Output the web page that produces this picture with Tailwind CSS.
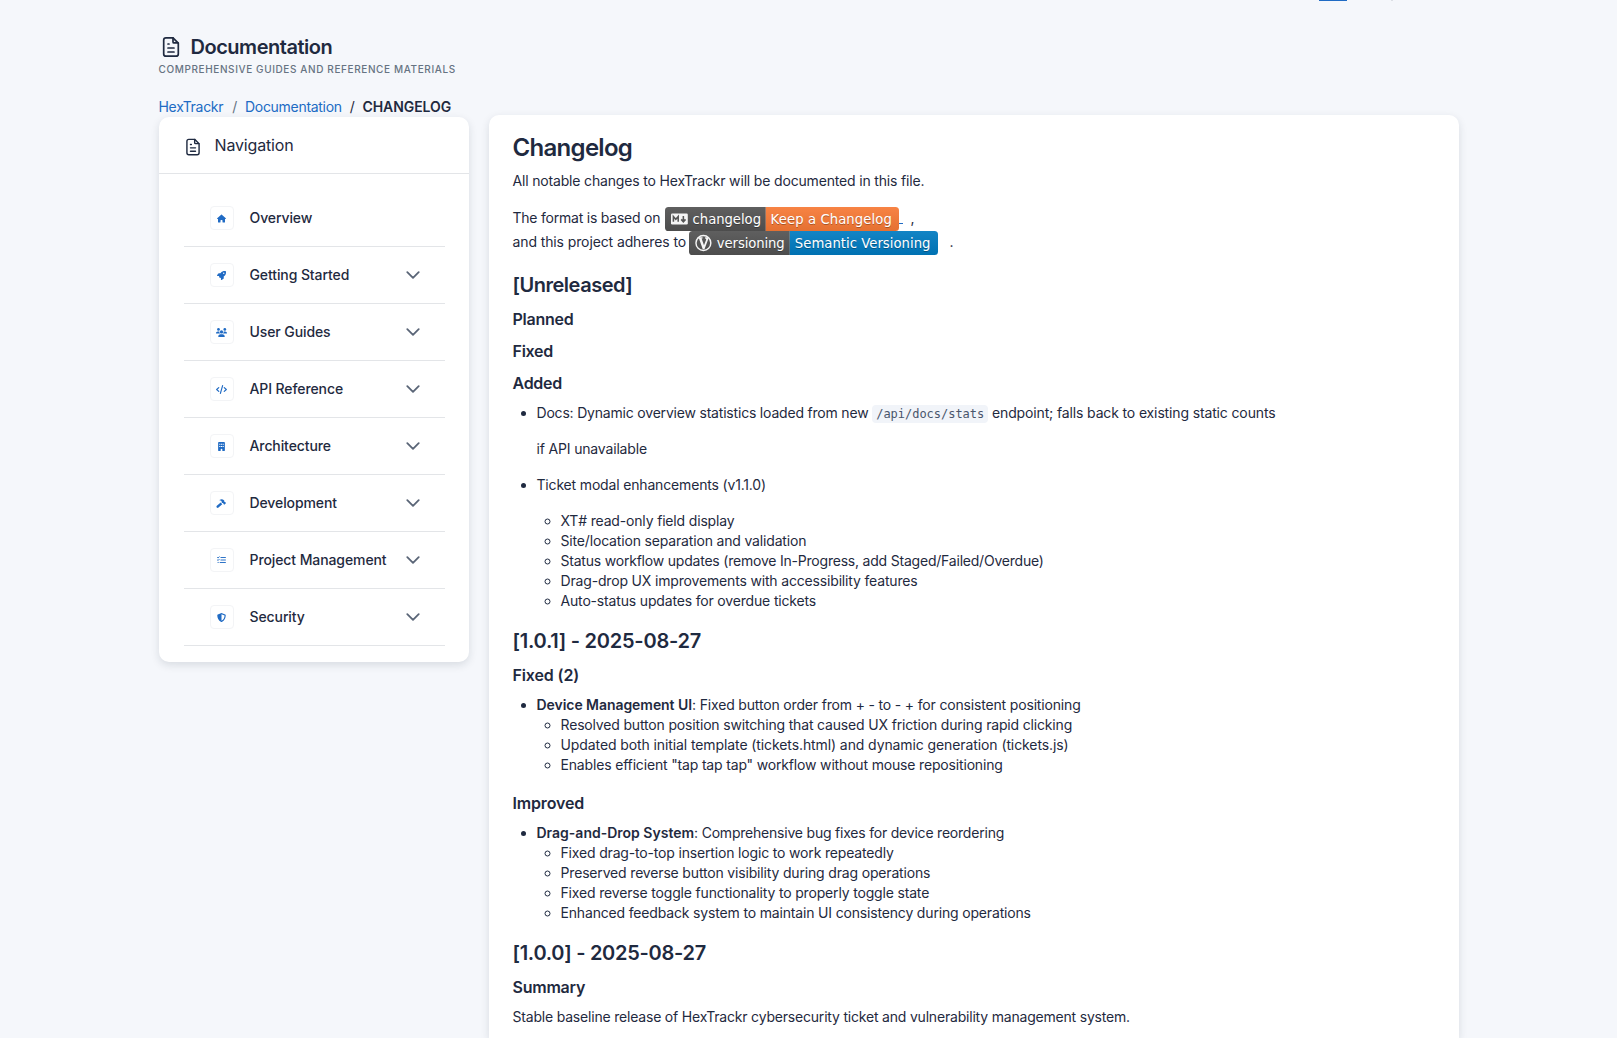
<!DOCTYPE html>
<html lang="en">
<head>
<meta charset="utf-8">
<title>Documentation</title>
<script src="https://cdn.jsdelivr.net/npm/@tailwindcss/browser@4"></script>
</head>
<body class="h-[1038px] overflow-hidden bg-[#f5f7fb] font-['Inter',sans-serif] text-sm leading-5 tracking-[-0.012em] text-[#1f2a40]">
<svg class="hidden">
  <symbol id="file" viewBox="0 0 24 24" fill="none" stroke="currentColor" stroke-width="1.7" stroke-linecap="round" stroke-linejoin="round"><path d="M14 2.9v4a1 1 0 0 0 1 1h4"/><path d="M17 21.2H7a2.3 2.3 0 0 1-2.3-2.3V5.1A2.3 2.3 0 0 1 7 2.8h7l5.3 5.3v10.8a2.3 2.3 0 0 1-2.3 2.3z"/><path d="M9 9h1M9 13h6M9 17h6"/></symbol>
  <symbol id="chev" viewBox="0 0 14 8" fill="none" stroke="currentColor" stroke-width="1.8" stroke-linecap="round" stroke-linejoin="round"><path d="M1.3 1.2 7 6.8l5.7-5.6"/></symbol>
</svg>
<div class="relative mx-auto w-[1300px]">
  <div class="absolute top-0 left-[1160px] h-px w-[28px] bg-[#206bc4]"></div>
  <div class="absolute top-0 left-[1232px] h-px w-[2px] bg-[#dcdfe5]"></div>
  <header class="pt-[33px]">
    <h1 class="flex h-7 items-center text-xl font-semibold tracking-[-0.024em]"><svg class="mr-2 size-6"><use href="#file"/></svg>Documentation</h1>
    <div class="h-4 text-[10px] leading-4 font-medium tracking-[0.061em] text-[#667382] uppercase">Comprehensive guides and reference materials</div>
  </header>
  <nav class="mt-5 flex h-5 gap-2 tracking-[-0.021em]"><a class="text-[#206bc4]">HexTrackr</a><span class="pl-px text-[#667382]">/</span><a class="text-[#206bc4]">Documentation</a><span>/</span><span class="font-semibold tracking-[-0.006em]">CHANGELOG</span></nav>

  <div class="-mt-0.5 flex items-start gap-5">
    <aside class="mt-0.5 h-[545px] w-[310px] rounded-[10px] bg-white shadow-[0_3px_8px_rgba(24,36,51,0.13)]">
      <div class="flex h-[57px] items-center border-b border-[#e3e5e8] pl-6 text-base tracking-[-0.01em]"><svg class="mt-1 mr-[12px] size-5"><use href="#file"/></svg>Navigation</div>
      <ul class="mr-6 ml-[25px] pt-4 font-medium tracking-[-0.007em]">
        <li class="flex h-[57px] items-center border-b border-[#e3e5e8] pr-6 pl-[26px]"><span class="mr-4 grid size-6 place-items-center rounded border border-[#f3f4f6] pr-px text-[#206bc4]"><svg class="h-[9px] w-[9px]" viewBox="0 0 576 512" fill="currentColor"><path d="M288 0c8 0 15 2 21 8l256 224c22 20 10 56-21 56h-32v184c0 22-18 40-40 40h-80c-22 0-40-18-40-40v-88c0-18-14-32-32-32h-64c-18 0-32 14-32 32v88c0 22-18 40-40 40h-80c-22 0-40-18-40-40V288H32c-31 0-43-36-21-56L267 8c6-6 13-8 21-8z"/></svg></span>Overview</li>
        <li class="flex h-[57px] items-center border-b border-[#e3e5e8] pr-[25px] pl-[26px]"><span class="mr-4 grid size-6 place-items-center rounded border border-[#f3f4f6] pr-px text-[#206bc4]"><svg class="size-[9px]" viewBox="0 0 512 512" fill="currentColor"><path d="M156.600 384.900L125.700 354c-8.500-8.500-11.500-20.800-7.700-32.200 3-8.900 7-20.500 11.800-33.800H24c-8.600 0-16.600-4.600-20.900-12.100s-4.200-16.700.2-24.100l52.500-88.500c13-21.900 36.500-35.300 61.900-35.300H200c2.400-4 4.800-7.700 7.200-11.300C289.100-4.100 411.100-8.100 483.900 5.300c11.600 2.100 20.600 11.200 22.800 22.800 13.400 72.900 9.300 194.800-111.400 276.700-3.500 2.400-7.300 4.800-11.300 7.200v82.300c0 25.400-13.400 49-35.300 61.900l-88.500 52.500c-7.400 4.400-16.600 4.500-24.100.2s-12.100-12.200-12.100-20.900V380.800c-14.100 4.900-26.400 8.900-35.700 11.900-11.200 3.600-23.400.5-31.700-7.800zM384 168a40 40 0 1 0 0-80 40 40 0 1 0 0 80z"/></svg></span>Getting Started<svg class="ml-auto h-2 w-3.5 text-[#5a6577]"><use href="#chev"/></svg></li>
        <li class="flex h-[57px] items-center border-b border-[#e3e5e8] pr-[25px] pl-[26px]"><span class="mr-4 grid size-6 place-items-center rounded border border-[#f3f4f6] pr-px text-[#206bc4]"><svg class="h-[9px] w-[11px]" viewBox="0 0 640 512" fill="currentColor"><circle cx="144" cy="80" r="80"/><circle cx="512" cy="80" r="80"/><circle cx="320" cy="224" r="96"/><path d="M0 299c0-59 48-107 107-107h42c16 0 31 4 45 10-6 46 8 88 41 118H21c-12 0-21-9-21-21zM405 320c33-30 47-72 41-118 14-6 29-10 45-10h42c59 0 107 48 107 107 0 12-9 21-21 21zM128 485c0-73 60-133 133-133h118c73 0 133 60 133 133 0 15-12 27-27 27H155c-15 0-27-12-27-27z"/></svg></span>User Guides<svg class="ml-auto h-2 w-3.5 text-[#5a6577]"><use href="#chev"/></svg></li>
        <li class="flex h-[57px] items-center border-b border-[#e3e5e8] pr-[25px] pl-[26px]"><span class="mr-4 grid size-6 place-items-center rounded border border-[#f3f4f6] pr-px text-[#206bc4]"><svg class="h-[9px] w-[11px]" viewBox="0 0 640 512" fill="none" stroke="currentColor" stroke-width="68" stroke-linecap="round" stroke-linejoin="round"><path d="M384 32 256 480M160 144 40 256l120 112M480 144l120 112-120 112"/></svg></span>API Reference<svg class="ml-auto h-2 w-3.5 text-[#5a6577]"><use href="#chev"/></svg></li>
        <li class="flex h-[57px] items-center border-b border-[#e3e5e8] pr-[25px] pl-[26px]"><span class="mr-4 grid size-6 place-items-center rounded border border-[#f3f4f6] pr-px text-[#206bc4]"><svg class="h-[9px] w-[7px]" viewBox="0 0 384 512" fill="currentColor" fill-rule="evenodd"><path d="M48 0h288a48 48 0 0 1 48 48v416a48 48 0 0 1-48 48h-96v-80a48 48 0 0 0-96 0v80H48a48 48 0 0 1-48-48V48A48 48 0 0 1 48 0zM64 96v64h64V96zM160 96v64h64V96zM256 96v64h64V96zM64 224v64h64v-64zM160 224v64h64v-64zM256 224v64h64v-64z"/></svg></span>Architecture<svg class="ml-auto h-2 w-3.5 text-[#5a6577]"><use href="#chev"/></svg></li>
        <li class="flex h-[57px] items-center border-b border-[#e3e5e8] pr-[25px] pl-[26px]"><span class="mr-4 grid size-6 place-items-center rounded border border-[#f3f4f6] pr-px text-[#206bc4]"><svg class="h-[9px] w-[10px]" viewBox="0 0 576 512" fill="currentColor"><path d="M200 52C300-10 370-10 440 55l40 42v55l20 20 20-8 48 48c10 10 10 20 0 30l-72 72c-10 10-22 10-32 0l-46-48 8-22-20-20h-55l-25-30v-54c0-25-40-55-126-72zM270 205l90 90L145 490c-35 32-70 25-98 0-28-28-32-65 0-98z"/></svg></span>Development<svg class="ml-auto h-2 w-3.5 text-[#5a6577]"><use href="#chev"/></svg></li>
        <li class="flex h-[57px] items-center border-b border-[#e3e5e8] pr-[25px] pl-[26px]"><span class="mr-4 grid size-6 place-items-center rounded border border-[#f3f4f6] pr-px text-[#206bc4]"><svg class="h-2 w-[9px]" viewBox="0 0 576 512" fill="none" stroke="currentColor" stroke-width="60" stroke-linecap="round" stroke-linejoin="round"><path d="m32 96 38 36 72-82M32 256l38 36 72-82M250 96h290M250 256h290M200 416h340M64 416h16"/></svg></span>Project Management<svg class="ml-auto h-2 w-3.5 text-[#5a6577]"><use href="#chev"/></svg></li>
        <li class="flex h-[57px] items-center border-b border-[#e3e5e8] pr-[25px] pl-[26px]"><span class="mr-4 grid size-6 place-items-center rounded border border-[#f3f4f6] pr-px text-[#206bc4]"><svg class="size-[9px]" viewBox="0 0 512 512" fill="currentColor" fill-rule="evenodd"><path d="M256 0 466 83c20 8 31 26 30 47-1 145-60 300-222 378-12 5-24 5-36 0C76 430 17 275 16 130c0-21 11-39 30-47zM256 67v378c125-62 172-190 175-304z"/></svg></span>Security<svg class="ml-auto h-2 w-3.5 text-[#5a6577]"><use href="#chev"/></svg></li>
      </ul>
    </aside>

    <main class="h-[923px] w-[970px] rounded-t-[10px] bg-white px-6 pt-4 shadow-[0_3px_8px_rgba(24,36,51,0.13)]">
      <h1 class="mb-[7px] pt-px text-2xl font-semibold tracking-[-0.029em]">Changelog</h1>
      <p class="mb-4">All notable changes to HexTrackr will be documented in this file.</p>
      <div class="mb-4">
        <div class="flex h-6 items-center"><span class="-mt-0.5 w-[152px] tracking-[-0.016em]">The format is based on</span>
          <svg class="h-6 w-[234px]" viewBox="0 0 195 20" font-family="DejaVu Sans" font-size="11" letter-spacing="0">
            <defs><linearGradient id="g" x2="0" y2="1"><stop offset="0" stop-color="#bbb" stop-opacity=".1"/><stop offset="1" stop-opacity=".1"/></linearGradient><clipPath id="r1"><rect width="195" height="20" rx="3"/></clipPath></defs>
            <g clip-path="url(#r1)"><path fill="#555" d="M0 0h84v20H0z"/><path fill="#fe7d37" d="M84 0h111v20H84z"/><path fill="url(#g)" d="M0 0h195v20H0z"/></g>
            <rect x="5" y="5.500" width="14" height="9" rx="1" fill="#f5f5f5"/><path d="M7 12.300V8l2 2.200L11 8v4.300M15.300 7.500v4M13.500 10.300l1.800 2 1.800-2" fill="none" stroke="#555" stroke-width="1.300"/>
            <g fill="#010101" fill-opacity=".3"><text x="23" y="15" textLength="57">changelog</text><text x="88" y="15" textLength="101">Keep a Changelog</text></g>
            <g fill="#fff"><text x="23" y="14" textLength="57">changelog</text><text x="88" y="14" textLength="101">Keep a Changelog</text></g>
          </svg><span class="mt-[9px] h-px w-1 bg-[#206bc4]"></span><span class="-mt-0.5 ml-2">,</span></div>
        <div class="flex h-6 items-center"><span class="-mt-0.5 w-[176px] tracking-[-0.008em]">and this project adheres to</span>
          <svg class="h-6 w-[249px]" viewBox="0 0 207.500 20" font-family="DejaVu Sans" font-size="11" letter-spacing="0">
            <defs><clipPath id="r2"><rect width="207.500" height="20" rx="3"/></clipPath></defs>
            <g clip-path="url(#r2)"><path fill="#555" d="M0 0h84v20H0z"/><path fill="#007ec6" d="M84 0h124v20H84z"/><path fill="url(#g)" d="M0 0h208v20H0z"/></g>
            <circle cx="12" cy="10" r="6.200" fill="none" stroke="#f5f5f5" stroke-width="1.200"/><path d="M7.200 5.300h4.100v1h-.8l2 5.500 1.700-4.300c.3-.8 0-1.200-.8-1.300v-.9h3.200l-3.700 9.900h-1.400L8.300 6.300H7.200z" fill="#f5f5f5"/>
            <g fill="#010101" fill-opacity=".3"><text x="23.200" y="15" textLength="56.500">versioning</text><text x="88.200" y="15" textLength="113">Semantic Versioning</text></g>
            <g fill="#fff"><text x="23.200" y="14" textLength="56.500">versioning</text><text x="88.200" y="14" textLength="113">Semantic Versioning</text></g>
          </svg><span class="-mt-0.5 ml-3">.</span></div>
      </div>
      <h2 class="mb-2 text-xl leading-7 font-semibold tracking-[-0.024em]">[Unreleased]</h2>
      <h3 class="mb-2 text-base font-semibold tracking-[-0.016em]">Planned</h3>
      <h3 class="mb-2 text-base font-semibold tracking-[-0.016em]">Fixed</h3>
      <h3 class="mb-2 text-base font-semibold tracking-[-0.016em]">Added</h3>
      <ul class="mb-4 list-disc pl-6">
        <li><p class="mb-4 h-5"><span class="tracking-[-0.014em]">Docs: Dynamic overview statistics loaded from new</span> <code class="rounded bg-[#f1f4f9] px-1 py-0.5 font-['DejaVu_Sans_Mono',monospace] text-[12px] tracking-[-0.002em] text-[#49566c]">/api/docs/stats</code> <span class="tracking-[-0.01em]">endpoint; falls back to existing static counts</span></p><p class="mb-4">if API unavailable</p></li>
        <li><p class="mb-4">Ticket modal enhancements (v1.1.0)</p>
          <ul class="list-[circle] pl-6"><li>XT# read-only field display</li><li>Site/location separation and validation</li><li class="tracking-[-0.015em]">Status workflow updates (remove In-Progress, add Staged/Failed/Overdue)</li><li>Drag-drop UX improvements with accessibility features</li><li>Auto-status updates for overdue tickets</li></ul></li>
      </ul>
      <h2 class="mb-2 text-xl leading-7 font-semibold tracking-[-0.012em]">[1.0.1] - 2025-08-27</h2>
      <h3 class="mb-2 text-base font-semibold tracking-[-0.008em]">Fixed (2)</h3>
      <ul class="mb-4 list-disc pl-6">
        <li><strong class="font-semibold tracking-[-0.004em]">Device Management UI</strong>: Fixed button order from + - to - + for consistent positioning
          <ul class="list-[circle] pl-6"><li>Resolved button position switching that caused UX friction during rapid clicking</li><li class="tracking-[-0.007em]">Updated both initial template (tickets.html) and dynamic generation (tickets.js)</li><li>Enables efficient "tap tap tap" workflow without mouse repositioning</li></ul></li>
      </ul>
      <h3 class="mb-2 text-base font-semibold tracking-[-0.01em]">Improved</h3>
      <ul class="mb-4 list-disc pl-6">
        <li><strong class="font-semibold tracking-[0]">Drag-and-Drop System</strong><span class="tracking-[-0.015em]">: Comprehensive bug fixes for device reordering</span>
          <ul class="list-[circle] pl-6"><li>Fixed drag-to-top insertion logic to work repeatedly</li><li>Preserved reverse button visibility during drag operations</li><li>Fixed reverse toggle functionality to properly toggle state</li><li>Enhanced feedback system to maintain UI consistency during operations</li></ul></li>
      </ul>
      <h2 class="mb-2 text-xl leading-7 font-semibold tracking-[-0.014em]">[1.0.0] - 2025-08-27</h2>
      <h3 class="mb-2 text-base font-semibold tracking-[-0.014em]">Summary</h3>
      <p class="h-5 tracking-[-0.014em]">Stable baseline release of HexTrackr cybersecurity ticket and vulnerability management system.</p>
    </main>
  </div>
</div>
</body>
</html>
